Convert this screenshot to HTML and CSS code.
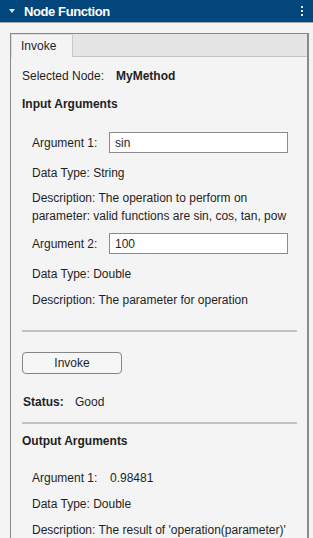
FILE: index.html
```html
<!DOCTYPE html>
<html lang="en">

<head>
    <meta charset="UTF-8" />
    <title>Node Function</title>
    <link rel="stylesheet" href="styles.css">
</head>

<body>
    <div class="header">
        <span class="caret"></span>
        <span class="title">Node Function</span>
        <span class="kebab"><i></i><i></i><i></i></span>
    </div>

    <div class="panel">
        <div class="tabs">
            <div class="tab active">Invoke</div>
            <div class="tab-fill"></div>
        </div>

        <div class="tab-body">
            <div class="row selected">
                <span class="sel-label">Selected Node:</span><b>MyMethod</b>
            </div>

            <div class="row heading h-input">Input Arguments</div>

            <div class="group">
                <div class="arg arg-first">
                    <span class="arg-label">Argument 1:</span>
                    <input type="text" class="arg-input" value="sin" />
                </div>
                <div class="row gap11">Data Type: String</div>
                <div class="row desc">Description: The operation to perform on parameter: valid functions are sin, cos, tan, pow</div>

                <div class="arg arg-second">
                    <span class="arg-label">Argument 2:</span>
                    <input type="text" class="arg-input" value="100" />
                </div>
                <div class="row gap11">Data Type: Double</div>
                <div class="row gap8">Description: The parameter for operation</div>
            </div>

            <hr class="sep sep-first" />

            <button type="button" class="invoke">Invoke</button>

            <div class="row status">
                <b class="status-label">Status:</b><span>Good</span>
            </div>

            <hr class="sep sep-second" />

            <div class="row heading h-output">Output Arguments</div>

            <div class="group">
                <div class="row out-arg">
                    <span class="arg-label">Argument 1:</span><span>0.98481</span>
                </div>
                <div class="row gap8">Data Type: Double</div>
                <div class="row gap8">Description: The result of 'operation(parameter)'</div>
            </div>
        </div>
    </div>
</body>

</html>
```

FILE: styles.css
```css
body {
    margin: 0;
    background-color: #f3f3f3;
    font-family: "Liberation Sans", Arial, sans-serif;
    font-size: 12px;
    color: #1f1f1f;
    height: 538px;
    overflow: hidden;
}

.header {
    height: 22px;
    background-color: #02467c;
    border-bottom: 1px solid #a6a6a6;
    display: flex;
    align-items: center;
    color: white;
}

.caret {
    width: 0;
    height: 0;
    margin-left: 9px;
    border-left: 3.5px solid transparent;
    border-right: 3.5px solid transparent;
    border-top: 4px solid #dfe7f0;
}

.title {
    margin-left: 9px;
    font-size: 13px;
    font-weight: bold;
    letter-spacing: -0.4px;
    flex: 1;
}

.kebab {
    display: flex;
    flex-direction: column;
    gap: 2px;
    margin-right: 10px;
}

.kebab i {
    width: 2px;
    height: 2px;
    background-color: #e6edf4;
}

.panel {
    margin: 10px 4px 0 10px;
    border: 1px solid #8a8a8a;
    border-right-width: 2px;
    border-bottom: none;
    background-color: #f4f4f4;
    height: 600px;
}

.tabs {
    display: flex;
    height: 23px;
}

.tab {
    width: 62px;
    padding-left: 9px;
    line-height: 22px;
    box-sizing: border-box;
    border-left: 1px solid #d8d8d8;
    border-right: 1px solid #c8c8c8;
    border-top: 1px solid #dcdcdc;
    background-color: #f4f4f4;
    font-size: 12px;
}

.tab-fill {
    flex: 1;
    background-color: #e5e5e5;
    border-bottom: 1px solid #c3c3c3;
}

.tab-body {
    padding: 0 10px 0 11px;
}

.row {
    line-height: 18px;
}

.selected {
    margin-top: 10px;
}

.sel-label {
    display: inline-block;
    width: 94px;
}

.heading {
    font-weight: bold;
}

.h-input {
    margin-top: 10px;
}

.group {
    padding-left: 10px;
}

.arg {
    display: flex;
    align-items: center;
    height: 21px;
}

.arg-first {
    margin-top: 19px;
}

.arg-second {
    margin-top: 8px;
}

.arg-label {
    display: inline-block;
    width: 77px;
}

.arg-input {
    width: 179px;
    height: 21px;
    box-sizing: border-box;
    border: 1px solid #8a8a8a;
    background-color: white;
    padding: 0 0 0 5px;
    margin: 0;
    font-family: "Liberation Sans", Arial, sans-serif;
    font-size: 12px;
    color: #1f1f1f;
    outline: none;
}

.gap11 {
    margin-top: 11px;
}

.gap8 {
    margin-top: 8px;
}

.desc {
    margin-top: 7px;
    width: 260px;
}

.sep {
    border: none;
    height: 2px;
    background-color: #c2c2c2;
    margin: 0;
}

.sep-first {
    margin-top: 21px;
}

.sep-second {
    margin-top: 11px;
}

.invoke {
    display: block;
    margin-top: 20px;
    width: 100px;
    height: 22px;
    border: 1px solid #858585;
    border-radius: 4px;
    background-color: #f6f6f6;
    font-family: "Liberation Sans", Arial, sans-serif;
    font-size: 12px;
    color: #1f1f1f;
    padding: 0;
}

.status {
    margin-top: 19px;
    padding-left: 1px;
}

.status-label {
    display: inline-block;
    width: 52px;
}

.h-output {
    margin-top: 8px;
}

.out-arg {
    margin-top: 19px;
}

.out-arg .arg-label {
    width: 78px;
}
```
